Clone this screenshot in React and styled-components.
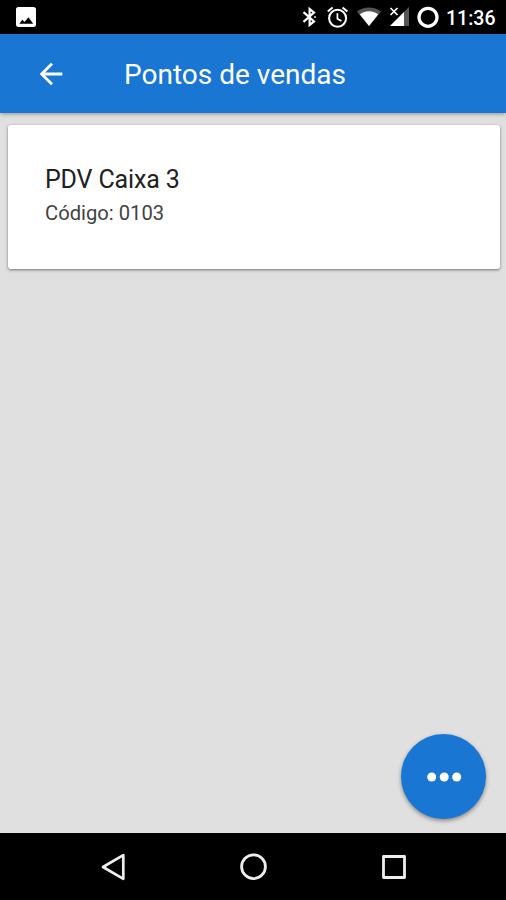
import React from 'react'
import styled, { createGlobalStyle } from 'styled-components'

const App = () => {
  return (
    <>
      <GlobalStyle />
      <Screen>
        <StatusBar>
          <svg width="20" height="20" viewBox="3 3 18 18" fill="#fff">
            <path d="M21 19V5c0-1.1-.9-2-2-2H5c-1.1 0-2 .9-2 2v14c0 1.1.9 2 2 2h14c1.1 0 2-.9 2-2zM6 18l2.700-3.600 2 2 3.500-4.200L18.500 18z" />
          </svg>
          <StatusIcons>
            <BluetoothIcon width="15" height="20" viewBox="0 0 15 20" fill="none" stroke="#fff" strokeWidth="2.200">
              <path d="M1.500 5.200L12 14.400L7.600 18V2L12 5.600L1.500 14.800" />
              <path d="M12 10h2" stroke="#aaa" />
            </BluetoothIcon>
            <svg width="22" height="22" viewBox="0 0 22 22" fill="none" stroke="#fff" strokeWidth="2">
              <circle cx="10.600" cy="12.200" r="8.500" />
              <path d="M.8 5.600L5.600 1.600M15.600 1.600L20.400 5.600" />
              <path d="M10.400 7.200v5.500l4 2.400" strokeWidth="1.700" />
            </svg>
            <svg width="26" height="20" viewBox="0 0 26 20">
              <path d="M1 4.500C8-.8 18-.8 25 4.500L13 19z" fill="#555" />
              <path d="M3.700 7.200C9.500 3.300 16.500 3.300 22.300 7.200L13 19z" fill="#fff" />
            </svg>
            <svg width="21" height="20" viewBox="0 0 21 20">
              <path d="M20 0v19H1z" fill="#555" />
              <path d="M15 5v14H1z" fill="#fff" />
              <path d="M0 0h10v9H0z" fill="#000" />
              <path d="M1.500 1l7 7M8.500 1l-7 7" stroke="#fff" strokeWidth="1.700" />
            </svg>
            <svg width="22" height="22" viewBox="0 0 22 22" fill="none" stroke="#fff" strokeWidth="3.300">
              <circle cx="11" cy="11.300" r="9" />
            </svg>
          </StatusIcons>
          <Clock>11:36</Clock>
        </StatusBar>

        <Toolbar>
          <BackButton aria-label="Voltar">
            <svg width="34" height="34" viewBox="0 0 24 24" fill="#fff">
              <path d="M20 11H7.830l5.590-5.590L12 4l-8 8 8 8 1.410-1.410L7.830 13H20v-2z" />
            </svg>
          </BackButton>
          <Title>Pontos de vendas</Title>
        </Toolbar>

        <Content>
          <Card>
            <CardTitle>PDV Caixa 3</CardTitle>
            <CardText>Código: 0103</CardText>
          </Card>
          <Fab aria-label="Mais">
            <svg width="36" height="12" viewBox="0 0 36 12" fill="#fff">
              <circle cx="5.700" cy="6" r="4.500" />
              <circle cx="18.200" cy="6" r="4.500" />
              <circle cx="30.700" cy="6" r="4.500" />
            </svg>
          </Fab>
        </Content>

        <NavBar>
          <svg width="28" height="30" viewBox="0 0 28 30" fill="none" stroke="#eee" strokeWidth="2.700" strokeLinejoin="round">
            <path d="M3 15L23.300 3.200v23.600z" />
          </svg>
          <svg width="28" height="28" viewBox="0 0 28 28" fill="none" stroke="#eee" strokeWidth="2.800">
            <circle cx="13.500" cy="13.700" r="11.900" />
          </svg>
          <svg width="28" height="28" viewBox="0 0 28 28" fill="none" stroke="#eee" strokeWidth="2.800" strokeLinejoin="round">
            <rect x="3.500" y="3.500" width="21" height="21" />
          </svg>
        </NavBar>
      </Screen>
    </>
  )
}

const GlobalStyle = createGlobalStyle`
    * {
        box-sizing: border-box;
    }
    body {
        margin: 0;
        font-family: Roboto, sans-serif;
    }
    svg {
        display: block;
        flex-shrink: 0;
    }
`
const Screen = styled.div`
    display: flex;
    flex-direction: column;
    width: 100%;
    height: 100vh;
    background-color: #e0e0e0;
    overflow: hidden;
`
const StatusBar = styled.div`
    display: flex;
    align-items: center;
    height: 34px;
    padding: 0 0 0 16px;
    background-color: #000;
`
const StatusIcons = styled.div`
    display: flex;
    align-items: center;
    gap: 7px;
    margin-left: auto;
`
const BluetoothIcon = styled.svg`
    margin-right: 3px;
`
const Clock = styled.span`
    width: 67px;
    padding-top: 3px;
    padding-left: 7px;
    color: #fff;
    font-size: 19.5px;
    font-weight: 500;
    line-height: 34px;
`
const Toolbar = styled.header`
    display: flex;
    align-items: center;
    height: 79px;
    padding-left: 34px;
    background-color: #1976d2;
    box-shadow: 0 1px 4px rgba(0, 0, 0, 0.35);
`
const BackButton = styled.button`
    border: none;
    padding: 0;
    background: none;
    cursor: pointer;
`
const Title = styled.h1`
    margin: 2px 0 0 56px;
    color: #fff;
    font-size: 28px;
    font-weight: 400;
    line-height: 36px;
`
const Content = styled.main`
    display: flex;
    flex-direction: column;
    flex: 1;
    padding: 12px 6px 14px 8px;
`
const Card = styled.div`
    height: 144px;
    padding: 39px 37px;
    border-radius: 3px;
    background-color: #fff;
    box-shadow: 0 1px 3px rgba(0, 0, 0, 0.5);
`
const CardTitle = styled.div`
    color: #212121;
    font-size: 25px;
    font-weight: 400;
    letter-spacing: -0.15px;
    line-height: 32px;
`
const CardText = styled.div`
    margin-top: 3px;
    color: #424242;
    font-size: 20.2px;
    line-height: 28px;
`
const Fab = styled.button`
    display: flex;
    align-items: center;
    justify-content: center;
    align-self: flex-end;
    width: 85px;
    height: 85px;
    margin-top: auto;
    margin-right: 14px;
    padding: 0;
    border: none;
    border-radius: 50%;
    background-color: #1976d2;
    box-shadow: 0 2px 4px rgba(0, 0, 0, 0.4);
    cursor: pointer;
`
const NavBar = styled.nav`
    display: flex;
    align-items: center;
    justify-content: space-between;
    height: 67px;
    padding: 0 98px 0 100px;
    background-color: #000;
`

export default App
